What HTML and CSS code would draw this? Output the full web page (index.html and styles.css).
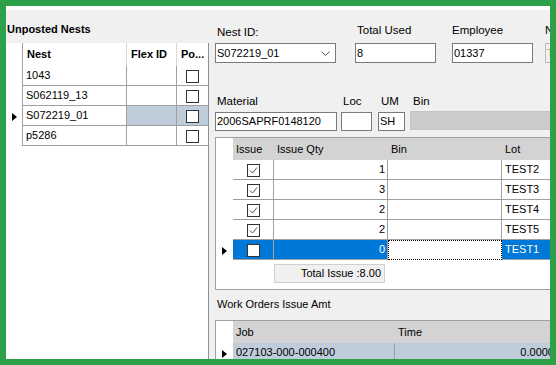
FILE: index.html
```html
<!DOCTYPE html>
<html lang="en">
<head>
    <meta charset="UTF-8">
    <meta name="viewport" content="width=device-width, initial-scale=1.0">
    <title>Nest Issue</title>
    <link rel="stylesheet" href="styles.css">
</head>
<body>
    <div class="window">
        <div class="left">
            <div class="left-title">Unposted Nests</div>
            <div class="left-grid">
                <table class="nests">
                    <colgroup>
                        <col class="c-rh"><col class="c-nest"><col class="c-flex"><col class="c-po">
                    </colgroup>
                    <thead>
                        <tr><th class="rh"></th><th>Nest</th><th>Flex ID</th><th>Po...</th></tr>
                    </thead>
                    <tbody>
                        <tr>
                            <td class="rh"></td><td>1043</td><td></td>
                            <td class="chk"><span class="box"></span></td>
                        </tr>
                        <tr>
                            <td class="rh"></td><td>S062119_13</td><td></td>
                            <td class="chk"><span class="box"></span></td>
                        </tr>
                        <tr class="current">
                            <td class="rh"><span class="arrow"></span></td><td>S072219_01</td><td class="sel"></td>
                            <td class="chk sel"><span class="box"></span></td>
                        </tr>
                        <tr>
                            <td class="rh"></td><td>p5286</td><td></td>
                            <td class="chk"><span class="box"></span></td>
                        </tr>
                    </tbody>
                </table>
            </div>
        </div>

        <div class="right">
            <div class="fields top-fields">
                <div class="field w-nest">
                    <label class="lbl-low">Nest ID:</label>
                    <div class="combo">
                        <span>S072219_01</span>
                        <svg class="chev" width="9" height="5" viewBox="0 0 9 5"><path d="M0.5 0.5 L4.5 4.5 L8.5 0.5" fill="none" stroke="#555" stroke-width="1"/></svg>
                    </div>
                </div>
                <div class="field w-total">
                    <label>Total Used</label>
                    <div class="textbox">8</div>
                </div>
                <div class="field w-emp">
                    <label class="lbl-flush">Employee</label>
                    <div class="textbox">01337</div>
                </div>
                <div class="field w-n">
                    <label class="lbl-flush">N</label>
                    <div class="textbox disabled">T</div>
                </div>
            </div>

            <div class="fields mat-fields">
                <div class="field w-mat">
                    <label>Material</label>
                    <div class="textbox">2006SAPRF0148120</div>
                </div>
                <div class="field w-loc">
                    <label>Loc</label>
                    <div class="textbox"></div>
                </div>
                <div class="field w-um">
                    <label class="lbl-wide">UM</label>
                    <div class="textbox">SH</div>
                </div>
                <div class="field w-bin">
                    <label class="lbl-wide">Bin</label>
                    <div class="combo disabled"></div>
                </div>
            </div>

            <div class="grid-box issue-box">
                <table class="issue">
                    <colgroup>
                        <col class="c-rh2"><col class="c-issue"><col class="c-qty"><col class="c-bin"><col class="c-lot">
                    </colgroup>
                    <thead>
                        <tr><th class="rh"></th><th>Issue</th><th>Issue Qty</th><th>Bin</th><th>Lot</th></tr>
                    </thead>
                    <tbody>
                        <tr>
                            <td class="rh"></td>
                            <td class="chk"><svg width="13" height="13" viewBox="0 0 13 13"><rect x="0.5" y="0.5" width="12" height="12" fill="#fff" stroke="#333"/><path d="M3 6.5 L5.5 9 L10 3.5" fill="none" stroke="#555"/></svg></td>
                            <td class="num">1</td><td></td><td>TEST2</td>
                        </tr>
                        <tr>
                            <td class="rh"></td>
                            <td class="chk"><svg width="13" height="13" viewBox="0 0 13 13"><rect x="0.5" y="0.5" width="12" height="12" fill="#fff" stroke="#333"/><path d="M3 6.5 L5.5 9 L10 3.5" fill="none" stroke="#555"/></svg></td>
                            <td class="num">3</td><td></td><td>TEST3</td>
                        </tr>
                        <tr>
                            <td class="rh"></td>
                            <td class="chk"><svg width="13" height="13" viewBox="0 0 13 13"><rect x="0.5" y="0.5" width="12" height="12" fill="#fff" stroke="#333"/><path d="M3 6.5 L5.5 9 L10 3.5" fill="none" stroke="#555"/></svg></td>
                            <td class="num">2</td><td></td><td>TEST4</td>
                        </tr>
                        <tr>
                            <td class="rh"></td>
                            <td class="chk"><svg width="13" height="13" viewBox="0 0 13 13"><rect x="0.5" y="0.5" width="12" height="12" fill="#fff" stroke="#333"/><path d="M3 6.5 L5.5 9 L10 3.5" fill="none" stroke="#555"/></svg></td>
                            <td class="num">2</td><td></td><td>TEST5</td>
                        </tr>
                        <tr class="active">
                            <td class="rh"><span class="arrow"></span></td>
                            <td class="chk"><span class="box"></span></td>
                            <td class="num">0</td><td class="focus"></td><td>TEST1</td>
                        </tr>
                    </tbody>
                </table>
                <div class="total">Total Issue :8.00</div>
            </div>

            <div class="section-label">Work Orders Issue Amt</div>

            <div class="grid-box wo-box">
                <table class="wo">
                    <colgroup>
                        <col class="c-rh2"><col class="c-job"><col class="c-time">
                    </colgroup>
                    <thead>
                        <tr><th class="rh"></th><th>Job</th><th>Time</th></tr>
                    </thead>
                    <tbody>
                        <tr>
                            <td class="rh"><span class="arrow"></span></td>
                            <td class="sel">027103-000-000400</td>
                            <td class="sel num">0.0000</td>
                        </tr>
                    </tbody>
                </table>
            </div>
        </div>
    </div>
</body>
</html>
```

FILE: styles.css
```css
html, body {
    margin: 0;
    height: 100%;
}

body {
    padding: 6px;
    box-sizing: border-box;
    background-color: #2da04a; /* green frame */
    font-family: "Liberation Sans", Arial, sans-serif;
    font-size: 11px;
    color: #000;
    overflow: hidden;
}

.window {
    height: 100%;
    display: flex;
    background-color: #f0f0f0;
    border-top: 4px solid #fff;
    box-sizing: border-box;
    overflow: hidden;
}

/* left panel */
.left {
    width: 203px;
    flex: none;
    display: flex;
    flex-direction: column;
}

.left-title {
    height: 33px;
    padding: 12px 0 0 1px;
    box-sizing: border-box;
    font-weight: bold;
    line-height: 14px;
}

.left-grid {
    flex: 1;
    background-color: #fff;
    border-right: 1px solid #8a9099;
}

table {
    border-collapse: separate;
    border-spacing: 0;
    table-layout: fixed;
}

th, td {
    padding: 0 0 0 3px;
    text-align: left;
    white-space: nowrap;
    overflow: hidden;
}

.nests { width: 202px; }
.c-rh { width: 17px; }
.c-nest { width: 104px; }
.c-flex { width: 50px; }
.c-po { width: 31px; }

.nests th {
    height: 23px;
    font-weight: bold;
    line-height: 23px;
    border-right: 1px solid #d8d8d8;
    padding-left: 4px;
}

.nests th:last-child { border-right: none; }

.nests td {
    line-height: 19px;
    border-bottom: 1px solid #a0a0a0;
    border-right: 1px solid #a0a0a0;
}

.nests td:last-child { border-right: none; }

.nests .rh,
.issue .rh,
.wo .rh {
    border-bottom: none;
    border-right: 1px solid #a0a0a0;
    padding-left: 6px;
    background-color: #fff;
}

.issue .rh, .wo .rh { border-right: none; }

.nests td.sel { background-color: #bfcddb; }

.chk {
    text-align: center;
    padding-left: 0;
}

.chk .box, .chk svg {
    display: inline-block;
    width: 13px;
    height: 13px;
    vertical-align: middle;
    box-sizing: border-box;
}

.chk .box {
    border: 1px solid #333;
    background-color: #fff;
}

.arrow {
    display: inline-block;
    width: 0;
    height: 0;
    border-top: 4px solid transparent;
    border-bottom: 4px solid transparent;
    border-left: 5px solid #000;
    vertical-align: middle;
}

/* right panel */
.right {
    flex: 1;
    min-width: 0;
    overflow: hidden;
    padding-left: 6px;
}

.fields {
    display: flex;
    width: 600px;
}

.top-fields {
    margin-top: 13px;
}

.field {
    display: flex;
    flex-direction: column;
    flex: none;
}

.field label {
    font-size: 11.5px;
    line-height: 14px;
    margin-bottom: 6px;
    padding-left: 2px;
}

.field label.lbl-low {
    padding-top: 2px;
    margin-bottom: 4px;
}

.field label.lbl-flush { padding-left: 0; }
.field label.lbl-wide { padding-left: 3px; }

.w-nest { width: 121px; margin-right: 19px; }
.w-total { width: 81px; margin-right: 16px; }
.w-emp { width: 81px; margin-right: 12px; }
.w-n { width: 60px; }

.mat-fields { margin-top: 31px; }
.mat-fields .field label { margin-bottom: 4px; }
.w-mat { width: 122px; margin-right: 4px; }
.w-loc { width: 31px; margin-right: 6px; }
.w-um { width: 27px; margin-right: 5px; }
.w-bin { width: 200px; }

.mat-fields .textbox { height: 19px; line-height: 17px; }

.textbox, .combo {
    height: 20px;
    border: 1px solid #7a7a7a;
    background-color: #fff;
    box-sizing: border-box;
    font-size: 11px;
    line-height: 18px;
    padding-left: 1px;
    white-space: nowrap;
    overflow: hidden;
}

.textbox.disabled {
    background-color: #f0f0f0;
    border-color: #b8b8b8;
    color: #c8a070;
}

.combo {
    display: flex;
    align-items: center;
    justify-content: space-between;
    padding: 0 5px 0 1px;
}

.combo.disabled {
    height: 19px;
    margin-top: -1px;
    background-color: #cccccc;
    border-color: #c4c4c4;
}

.chev { flex: none; }

/* grids */
.grid-box {
    width: 420px;
    border: 1px solid #a0a0a0;
    background-color: #fff;
    box-sizing: border-box;
}

.issue-box {
    margin-top: 6px;
    height: 153px;
}

.issue { width: 418px; }
.wo { width: 340px; }
.c-rh2 { width: 17px; }
.c-issue { width: 41px; }
.c-qty { width: 114px; }
.c-bin { width: 114px; }
.c-lot { width: 132px; }
.c-job { width: 162px; }
.c-time { width: 161px; }

.issue th, .wo th {
    height: 22px;
    line-height: 22px;
    font-weight: normal;
    background-color: #d3d3d3;
}

.issue th.rh, .wo th.rh { background-color: #fff; }

.issue td, .wo td {
    line-height: 19px;
    border-bottom: 1px solid #a0a0a0;
    border-right: 1px solid #a0a0a0;
}

.issue td:last-child, .wo td:last-child { border-right: none; }

td.num {
    text-align: right;
    padding: 0 2px 0 0;
}

.issue tr.active td {
    background-color: #0078d7;
    color: #fff;
}

.issue tr.active td.rh {
    background-color: #fff;
    color: #000;
}

.issue tr.active td.focus {
    background-color: #fff;
    border: 1px dotted #000;
    line-height: 18px;
}

.total {
    width: 111px;
    height: 19px;
    margin: 4px 0 0 58px;
    box-sizing: border-box;
    border: 1px solid #d0d0d0;
    background-color: #f0f0f0;
    text-align: right;
    padding-right: 3px;
    line-height: 17px;
}

.section-label {
    margin-top: 7px;
    padding-left: 2px;
    line-height: 14px;
}

.wo-box {
    margin-top: 9px;
}

.wo td.sel { background-color: #bfcddb; }
```
